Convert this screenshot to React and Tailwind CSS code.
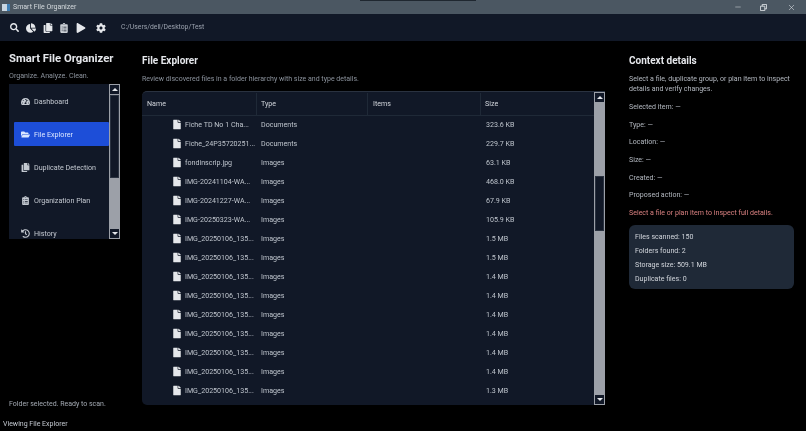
import { Minus, X } from "lucide-react"
import {
  FaSearch,
  FaChartPie,
  FaCopy,
  FaClipboardList,
  FaPlay,
  FaCog,
  FaFile,
  FaTachometerAlt,
  FaFolderOpen,
  FaHistory,
} from "react-icons/fa"

const font = { fontFamily: 'Roboto, "Noto Sans", sans-serif' }

const rows = [
  ["Fiche TD No 1 Cha...", "Documents", "323.6 KB"],
  ["Fiche_24P35720251...", "Documents", "229.7 KB"],
  ["fondinscrip.jpg", "Images", "63.1 KB"],
  ["IMG-20241104-WA...", "Images", "468.0 KB"],
  ["IMG-20241227-WA...", "Images", "67.9 KB"],
  ["IMG-20250323-WA...", "Images", "105.9 KB"],
  ["IMG_20250106_135...", "Images", "1.5 MB"],
  ["IMG_20250106_135...", "Images", "1.5 MB"],
  ["IMG_20250106_135...", "Images", "1.4 MB"],
  ["IMG_20250106_135...", "Images", "1.4 MB"],
  ["IMG_20250106_135...", "Images", "1.4 MB"],
  ["IMG_20250106_135...", "Images", "1.4 MB"],
  ["IMG_20250106_135...", "Images", "1.4 MB"],
  ["IMG_20250106_135...", "Images", "1.4 MB"],
  ["IMG_20250106_135...", "Images", "1.3 MB"],
  ["", "", ""],
]

const details = ["Selected item: —", "Type: —", "Location: —", "Size: —", "Created: —", "Proposed action: —"]
const stats = ["Files scanned: 150", "Folders found: 2", "Storage size: 509.1 MB", "Duplicate files: 0"]

function Arrow({ down }) {
  return (
    <div className="h-[11px] shrink-0 bg-[#9ca0a8] flex items-center justify-center">
      <div className="w-[9px] h-[9px] bg-[#111827] flex items-center justify-center">
        <div className={`w-0 h-0 border-x-[3px] border-x-transparent ${down ? "border-t-[3px] border-t-[#e5e7eb]" : "border-b-[3px] border-b-[#e5e7eb]"}`} />
      </div>
    </div>
  )
}

function NavItem({ icon, label, active }) {
  return (
    <div className={`flex items-center h-[24px] shrink-0 rounded-[1px] ${active ? "bg-[#1d4ed8] text-[#dbe6ff]" : "text-[#c4c9d1]"}`}>
      <div className="w-[18px] pl-[4px] flex justify-center shrink-0">{icon}</div>
      <span className="ml-[2px] pt-[1px] text-[7.150px] leading-none whitespace-nowrap">{label}</span>
    </div>
  )
}

export default function App() {
  return (
    <div style={font} className="w-[806px] h-[431px] overflow-hidden bg-black flex flex-col relative">
      {/* window title bar */}
      <div className="h-[14px] shrink-0 bg-[#4b5762] flex items-center relative">
        <div className="ml-[2px] w-[8px] h-[7px] bg-[#c9d6e2] border-r-[3px] border-[#3f7fb5]" />
        <span className="ml-[3px] text-[7px] text-[#d5dade] leading-none will-change-transform">Smart File Organizer</span>
        <div className="absolute top-0 left-[360px] w-[116px] h-[1px] bg-[#1f2730]" />
        <div className="ml-auto flex items-center text-[#dfe3e7]">
          <Minus size={8} strokeWidth={1.500} className="mr-[18px]" />
          <svg viewBox="0 0 8 8" className="w-[7px] h-[7px] mr-[20px] fill-none stroke-[#dfe3e7]">
            <path d="M.5 2.500h5v5h-5zM2.500 2.500v-2h5v5h-2" />
          </svg>
          <X size={9} strokeWidth={1.500} className="mr-[10px]" />
        </div>
      </div>

      {/* toolbar */}
      <div className="h-[27px] shrink-0 bg-[#111827] flex items-center pl-[10px] text-[#e5e7eb]">
        <FaSearch size={9} />
        <FaChartPie size={10} className="ml-[7px]" />
        <FaCopy size={10} className="ml-[7px]" />
        <FaClipboardList size={10} className="ml-[6px] text-[#cbd0d6]" />
        <FaPlay size={10} className="ml-[6.500px]" />
        <FaCog size={10} className="ml-[10px]" />
        <span className="ml-[15.500px] text-[6.800px] text-[#9ca3af] leading-none will-change-transform">C:/Users/dell/Desktop/Test</span>
      </div>

      <div className="flex-1 flex min-h-0">
        {/* sidebar */}
        <aside className="w-[142px] shrink-0 pl-[9px] flex flex-col will-change-transform">
          <h1 className="mt-[10px] text-[11.300px] leading-[15px] font-bold text-[#e5e7eb] whitespace-nowrap">Smart File Organizer</h1>
          <p className="mt-[5px] text-[7.100px] leading-[9px] text-[#8b929c]">Organize. Analyze. Clean.</p>
          <div className="mt-[4px] w-[111px] h-[155px] bg-[#111827] flex overflow-hidden">
            <div className="w-[100px] shrink-0 pl-[5px] pt-[5px] flex flex-col gap-[9px]">
              <NavItem icon={<FaTachometerAlt size={9} />} label="Dashboard" />
              <NavItem icon={<FaFolderOpen size={9} />} label="File Explorer" active />
              <NavItem icon={<FaCopy size={9} />} label="Duplicate Detection" />
              <NavItem icon={<FaClipboardList size={9} />} label="Organization Plan" />
              <NavItem icon={<FaHistory size={9} />} label="History" />
            </div>
            <div className="ml-auto w-[11px] flex flex-col bg-[#9ca0a8] px-[1px]">
              <Arrow />
              <div className="h-[83px] bg-[#111827] border border-[#2a3240]" />
              <div className="flex-1" />
              <Arrow down />
            </div>
          </div>
          <p className="mt-auto mb-[8px] text-[7px] leading-[9px] text-[#a3a9b2]">Folder selected. Ready to scan.</p>
        </aside>

        {/* file explorer */}
        <main className="w-[463px] shrink-0 flex flex-col will-change-transform">
          <h2 className="mt-[13px] text-[10px] leading-[13px] font-bold text-[#e5e7eb]">File Explorer</h2>
          <p className="mt-[8px] text-[7px] leading-[9px] text-[#8b929c] whitespace-nowrap">Review discovered files in a folder hierarchy with size and type details.</p>
          <div className="mt-[7px] h-[314px] bg-[#111827] rounded-l-[5px] border-t border-[#2a3240] flex overflow-hidden">
            <div className="flex-1 min-w-0 flex flex-col">
              <div className="h-[24px] shrink-0 flex items-center border-b border-[#1f2937] text-[7.100px] text-[#d1d5db] pt-[1px]">
                <div className="w-[115px] h-full flex items-center pl-[5px] border-r border-[#1f2937]">Name</div>
                <div className="w-[111px] h-full flex items-center pl-[4px] border-r border-[#1f2937]">Type</div>
                <div className="w-[113px] h-full flex items-center pl-[5px] border-r border-[#1f2937]">Items</div>
                <div className="flex-1 h-full flex items-center pl-[4px]">Size</div>
              </div>
              <div className="flex-1 min-h-0 overflow-hidden">
                {rows.map((row, i) => (
                  <div key={i} className="h-[19px] shrink-0 flex items-center text-[7.100px] text-[#bfc5cd] whitespace-nowrap -translate-y-[0.500px]">
                    <div className="w-[115px] shrink-0 flex items-center pl-[30px]">
                      <FaFile size={10} className="shrink-0 text-[#e5e7eb]" />
                      <span className="ml-[3px]">{row[0]}</span>
                    </div>
                    <div className="w-[111px] shrink-0 pl-[4px]">{row[1]}</div>
                    <div className="w-[113px] shrink-0" />
                    <div className="pl-[5px]">{row[2]}</div>
                  </div>
                ))}
              </div>
            </div>
            <div className="w-[11px] shrink-0 flex flex-col bg-[#9ca0a8] px-[1px]">
              <Arrow />
              <div className="h-[73px] shrink-0" />
              <div className="h-[55px] shrink-0 bg-[#111827] border border-[#2a3240]" />
              <div className="flex-1" />
              <Arrow down />
            </div>
          </div>
        </main>

        {/* context panel */}
        <aside className="flex-1 pl-[24px] pr-[12px] flex flex-col will-change-transform">
          <h2 className="mt-[13px] text-[10px] leading-[13px] font-bold text-[#e5e7eb]">Context details</h2>
          <p className="mt-[7px] text-[7.050px] leading-[9.500px] text-[#b4b9c1]">Select a file, duplicate group, or plan item to inspect details and verify changes.</p>
          <div className="mt-[9px] flex flex-col gap-[8.700px]">
            {details.map((d) => (
              <p key={d} className="text-[7.050px] leading-[9px] text-[#b4b9c1]">{d}</p>
            ))}
          </div>
          <p className="mt-[9px] text-[7.050px] leading-[9px] text-[#d98080] whitespace-nowrap">Select a file or plan item to inspect full details.</p>
          <div className="mt-[8px] h-[64px] rounded-[6px] bg-[#1f2937] pl-[6px] flex flex-col justify-center gap-[5px]">
            {stats.map((s) => (
              <p key={s} className="text-[7.050px] leading-[9px] text-[#d1d5db]">{s}</p>
            ))}
          </div>
        </aside>
      </div>

      {/* status bar */}
      <div className="h-[14px] shrink-0 bg-black flex items-center pl-[3px] text-[7px] text-[#c4c9d1] will-change-transform">Viewing File Explorer</div>
    </div>
  )
}
